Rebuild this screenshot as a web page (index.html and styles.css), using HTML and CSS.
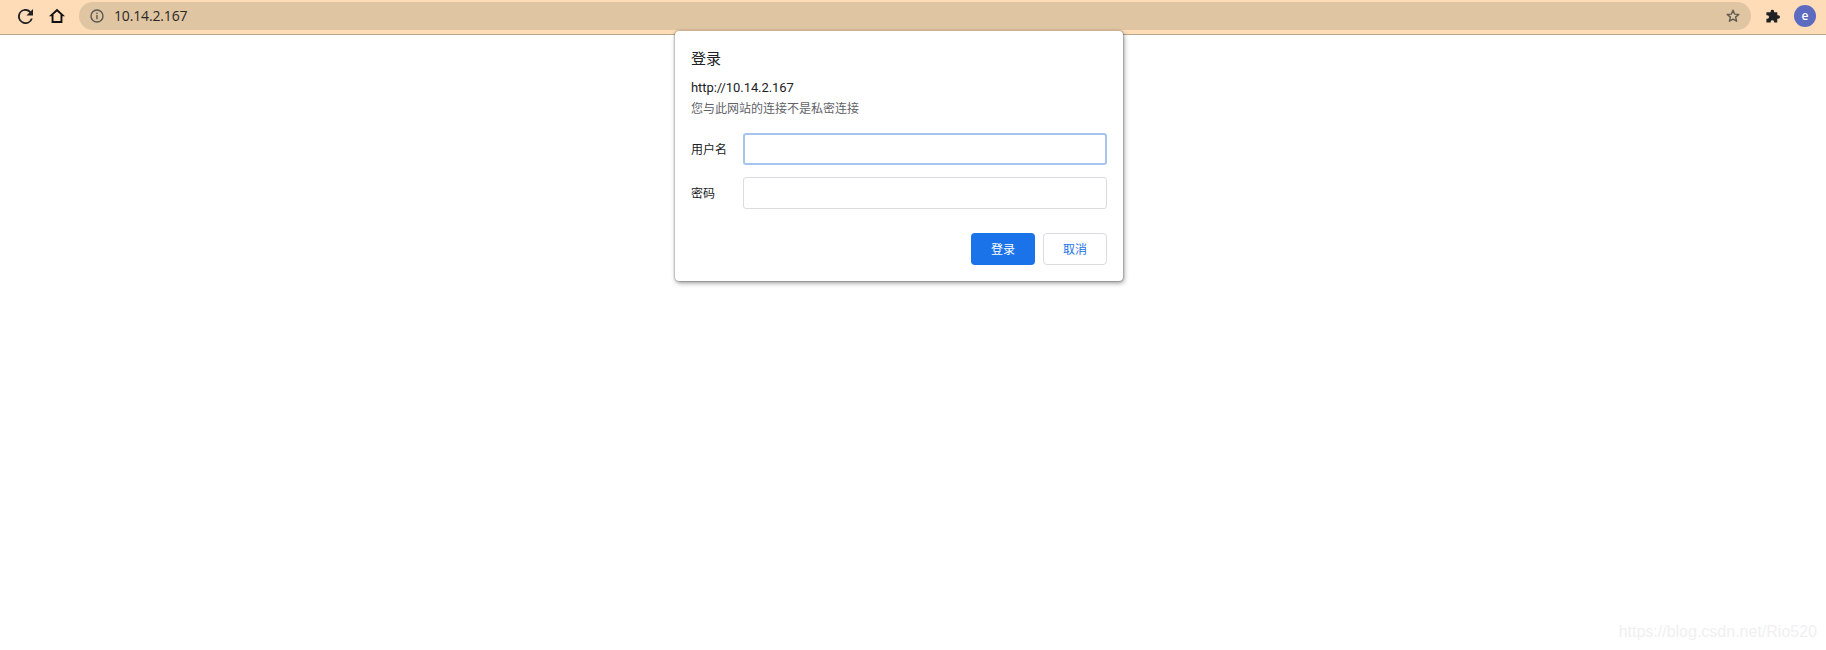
FILE: index.html
```html
<!DOCTYPE html>
<html lang="zh-CN">
<head>
<meta charset="utf-8">
<title>登录</title>
<link rel="stylesheet" href="styles.css">
</head>
<body>
<header class="toolbar">
  <svg class="reload" width="15" height="15" viewBox="0 0 16 16"><path d="M13.65 2.35A8 8 0 1 0 15.73 10h-2.08A6 6 0 1 1 8 2c1.66 0 3.14.69 4.22 1.78L9 7h7V0z" fill="#202124"/></svg>
  <svg class="home" width="16" height="16" viewBox="0 0 16 16"><path d="M8 .8 0 8.2h2.6V15h10.8V8.2H16zM4.5 13.1V6.6L8 3.4l3.5 3.2v6.5z" fill="#111"/></svg>
  <div class="omnibox">
    <svg class="info" width="14" height="14" viewBox="0 0 14 14"><circle cx="7" cy="7" r="6" fill="none" stroke="#5a5650" stroke-width="1.4"/><rect x="6.3" y="6" width="1.4" height="4.2" fill="#5a5650"/><rect x="6.3" y="3.6" width="1.4" height="1.5" fill="#5a5650"/></svg>
    <span class="url">10.14.2.167</span>
    <svg class="star" width="14" height="14" viewBox="1 1 14 14"><path d="M8 2.2l1.6 3.9 4.2.3-3.2 2.7 1 4.1L8 11.1l-3.6 2.1 1-4.1-3.2-2.7 4.2-.3z" fill="none" stroke="#5f5a52" stroke-width="1.4" stroke-linejoin="round"/></svg>
  </div>
  <svg class="puzzle" width="15" height="15" viewBox="0 0 16 16"><path d="M6 2.2a1.9 1.9 0 0 1 3.7 0V3.5h3.4v3.2h1a1.9 1.9 0 0 1 0 3.8h-1v4H9.7v-1a1.9 1.9 0 0 0-3.7 0v1H1.5v-4h.9a1.9 1.9 0 0 0 0-3.8h-.9V3.5H6z" fill="#202124"/></svg>
  <div class="avatar">e</div>
</header>

<main class="page"></main>

<section class="dialog">
  <h1 class="dialog-title">登录</h1>
  <p class="origin">http://10.14.2.167</p>
  <p class="notice">您与此网站的连接不是私密连接</p>
  <div class="form">
    <label class="row"><span class="label">用户名</span><span class="input focused"></span></label>
    <label class="row"><span class="label">密码</span><span class="input"></span></label>
  </div>
  <div class="actions">
    <button class="btn primary">登录</button>
    <button class="btn ghost">取消</button>
  </div>
</section>

<div class="watermark">https://blog.csdn.net/Rio520</div>
</body>
</html>
```
FILE: styles.css
```css
* { box-sizing: border-box; }
html, body { margin: 0; height: 100%; background: #fff; overflow: hidden; }
body { font-family: "Open Sans", "Noto Sans CJK SC", sans-serif; color: #202124; }

.toolbar {
  height: 35px;
  background: #fedcb8;
  border-bottom: 1px solid #b9a58e;
  display: flex;
  align-items: center;
  padding: 2px 10px 4px 18px;
}
.reload { flex: none; }
.home { flex: none; margin-left: 16px; }
.omnibox {
  flex: none;
  width: 1672px;
  height: 28px;
  margin-left: 14px;
  border-radius: 14px;
  background: #dfc5a2;
  display: flex;
  align-items: center;
  padding: 0 11px;
}
.info { flex: none; }
.url { margin-left: 10px; font: 14px/28px "Open Sans", sans-serif; letter-spacing: -.15px; color: #2a2825; flex: 1; }
.star { flex: none; }
.puzzle { flex: none; margin-left: 14px; }
.avatar {
  flex: none;
  width: 22px;
  height: 22px;
  margin-left: 14px;
  border-radius: 50%;
  background: #5c6bc0;
  color: #fff;
  font: 600 12px/21px "Open Sans", sans-serif;
  text-align: center;
}

.dialog {
  position: absolute;
  left: 675px;
  top: 31px;
  width: 448px;
  height: 250px;
  background: #fff;
  border-radius: 4px;
  box-shadow: 0 0 2px rgba(0,0,0,.55), 1px 2px 5px rgba(0,0,0,.4);
  padding: 16px;
}
.dialog-title { margin: 0; font: 400 15px/22px "Noto Sans CJK SC", sans-serif; color: #202124; }
.origin { margin: 11px 0 0; font: 13px/16px Roboto, sans-serif; letter-spacing: -.08px; color: #202124; }
.notice { margin: 3px 0 0; font: 12px/18px "Noto Sans CJK SC", sans-serif; color: #5f6368; }
.form { margin-top: 16px; display: flex; flex-direction: column; gap: 12px; }
.row { display: flex; align-items: center; }
.label { width: 52px; flex: none; font: 12px/18px "Noto Sans CJK SC", sans-serif; color: #202124; }
.input {
  flex: 1;
  height: 32px;
  border: 1px solid #dadce0;
  border-radius: 3px;
  background: #fff;
}
.input.focused { border: 2px solid #a6c5ee; }
.actions { margin-top: 24px; display: flex; justify-content: flex-end; gap: 8px; }
.btn {
  width: 64px;
  height: 32px;
  padding: 0;
  border-radius: 4px;
  font: 12px/18px "Noto Sans CJK SC", sans-serif;
}
.primary { background: #1a73e8; border: 0; color: #fff; }
.ghost { background: #fff; border: 1px solid #dadce0; color: #1a73e8; }

.watermark {
  position: absolute;
  right: 9px;
  top: 621px;
  font: 16px/22px "Liberation Sans", sans-serif;
  color: #f0f0f0;
}
```
